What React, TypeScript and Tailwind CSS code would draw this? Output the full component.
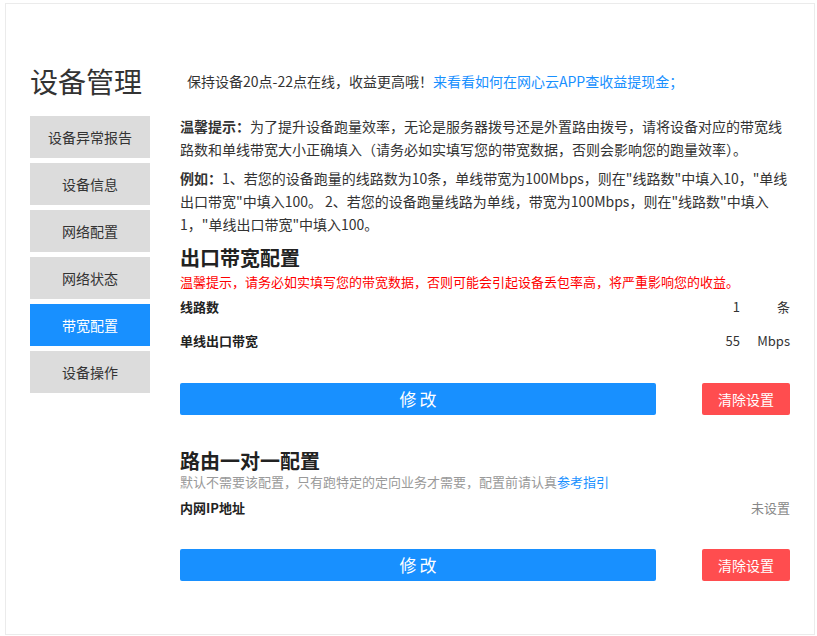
import React from 'react';

const MENU = ['设备异常报告', '设备信息', '网络配置', '网络状态', '带宽配置', '设备操作'];
const ACTIVE = '带宽配置';

function ActionButtons() {
  return (
    <div className="flex items-center justify-between">
      <button className="h-[32px] w-[476px] rounded-[2px] bg-[#1890ff] pl-[3px] text-[17px] tracking-[3px] text-white">修改</button>
      <button className="h-[32px] w-[88px] rounded-[2px] bg-[#ff4d4f] text-[14px] text-white">清除设置</button>
    </div>
  );
}

function ValueRow({ label, value, unit }: { label: string; value: string; unit?: string }) {
  return (
    <div className="flex h-[20px] items-center justify-between leading-[20px]">
      <span className="text-[13px] font-bold text-[#222]">{label}</span>
      <div className="flex items-center text-[13px] text-[#333]">
        <span>{value}</span>
        {unit && <span className="w-[50px] text-right">{unit}</span>}
      </div>
    </div>
  );
}

export default function App() {
  return (
    <div className="h-[636px] w-[817px] bg-white pt-[3px] pl-[5px] font-['Noto_Sans_CJK_SC',sans-serif] text-[#333]">
      <div className="flex h-[632px] w-[810px] gap-[30px] border border-[#ebebeb] pt-[57px] pl-[24px] pr-[23px]">
        <aside className="w-[120px] shrink-0">
          <h1 className="h-[40px] text-[28px] leading-[40px] text-[#333]">设备管理</h1>
          <nav className="mt-[15px] flex flex-col gap-[5px]">
            {MENU.map((item) => (
              <div
                key={item}
                className={
                  item === ACTIVE
                    ? 'flex h-[42px] items-center justify-center bg-[#1890ff] text-[14px] text-white'
                    : 'flex h-[42px] items-center justify-center bg-[#dcdcdc] text-[14px] text-[#333]'
                }
              >
                {item}
              </div>
            ))}
          </nav>
        </aside>

        <main className="w-[610px]">
          <p className="h-[40px] pl-[7px] text-[14px] leading-[40px]">
            保持设备20点-22点在线，收益更高哦！<span className="text-[#1890ff]">来看看如何在网心云APP查收益提现金；</span>
          </p>
          <p className="mt-[14px] text-[14px] leading-[23px]">
            <b>温馨提示：</b>为了提升设备跑量效率，无论是服务器拨号还是外置路由拨号，请将设备对应的带宽线路数和单线带宽大小正确填入（请务必如实填写您的带宽数据，否则会影响您的跑量效率）。
          </p>
          <p className="mt-[6px] text-[14px] leading-[23px]">
            <b>例如：</b>1、若您的设备跑量的线路数为10条，单线带宽为100Mbps，则在"线路数"中填入10，"单线出口带宽"中填入100。 2、若您的设备跑量线路为单线，带宽为100Mbps，则在"线路数"中填入1，"单线出口带宽"中填入100。
          </p>

          <h2 className="mt-[8px] text-[20px] font-bold leading-[28px] text-[#222]">出口带宽配置</h2>
          <p className="text-[13px] leading-[20px] text-[#ff0000]">温馨提示，请务必如实填写您的带宽数据，否则可能会引起设备丢包率高，将严重影响您的收益。</p>
          <div className="mt-[5px] flex flex-col gap-[14px]">
            <ValueRow label="线路数" value="1" unit="条" />
            <ValueRow label="单线出口带宽" value="55" unit="Mbps" />
          </div>
          <div className="mt-[32px]">
            <ActionButtons />
          </div>

          <h2 className="mt-[33px] text-[20px] font-bold leading-[26px] text-[#222]">路由一对一配置</h2>
          <p className="text-[13px] leading-[16px] text-[#999]">
            默认不需要该配置，只有跑特定的定向业务才需要，配置前请认真<span className="text-[#1890ff]">参考指引</span>
          </p>
          <div className="mt-[8px] flex h-[20px] items-center justify-between leading-[20px]">
            <span className="text-[13px] font-bold text-[#222]">内网IP地址</span>
            <span className="text-[13px] text-[#888]">未设置</span>
          </div>
          <div className="mt-[31px]">
            <ActionButtons />
          </div>
        </main>
      </div>
    </div>
  );
}
